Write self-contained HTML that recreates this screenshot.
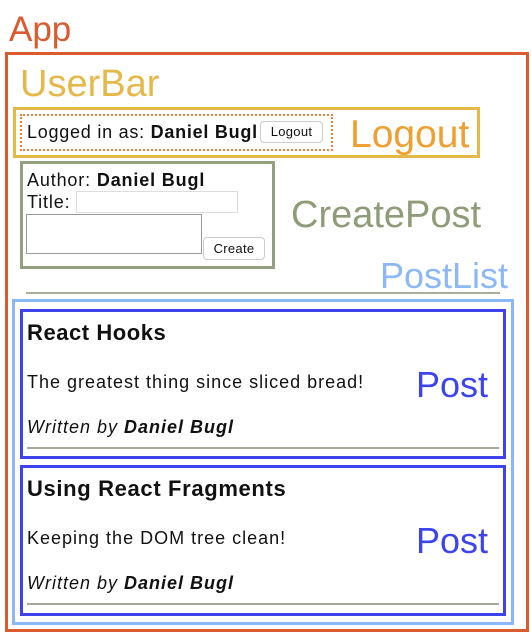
<!DOCTYPE html>
<html><head><meta charset="utf-8"><style>
body{margin:0;width:531px;height:636px;background:#fff;position:relative;overflow:hidden;font-family:"Liberation Sans",sans-serif;color:#111}
.a{position:absolute;line-height:1;white-space:nowrap}
.b{position:absolute;box-sizing:border-box}
.t{font-size:18px;letter-spacing:0.85px}
.btn{position:absolute;box-sizing:border-box;border:1px solid #ccc;border-radius:4px;background:#fff;font-size:13px;text-align:center;color:#111;letter-spacing:0.3px}
</style></head><body>
<div class="a" style="left:9px;top:12px;font-size:35px;color:#d95b2e">App</div>
<div class="b" style="left:5px;top:52px;width:524px;height:580px;border:3px solid #d95b2e"></div>

<div class="a" style="left:20px;top:65px;font-size:38px;color:#e5b84a">UserBar</div>
<div class="b" style="left:13px;top:107px;width:467px;height:51px;border:3px solid #e5b84a"></div>
<div class="b" style="left:20px;top:114px;width:313px;height:37px;border:2px dotted #e8843a"></div>
<div class="a t" style="left:27px;top:123px;letter-spacing:0.75px">Logged in as: <b>Daniel Bugl</b></div>
<div class="btn" style="left:260px;top:121px;width:63px;height:22px;line-height:20px">Logout</div>
<div class="a" style="left:350px;top:115px;font-size:39px;color:#f0a030">Logout</div>

<div class="b" style="left:20px;top:161px;width:255px;height:108px;border:3px solid #93a07e"></div>
<div class="a t" style="left:27px;top:171px">Author: <b>Daniel Bugl</b></div>
<div class="a t" style="left:27px;top:193px">Title:</div>
<div class="b" style="left:76px;top:191px;width:162px;height:22px;border:1px solid #ddd"></div>
<div class="b" style="left:26px;top:214px;width:176px;height:40px;border:1px solid #999"></div>
<div class="btn" style="left:203px;top:237px;width:62px;height:23px;line-height:21px">Create</div>
<div class="a" style="left:291px;top:196px;font-size:38px;color:#8f9c78">CreatePost</div>

<div class="a" style="left:380px;top:258px;font-size:36px;color:#8cb8f5">PostList</div>
<div class="b" style="left:26px;top:292px;width:474px;height:2px;background:#a8b097"></div>
<div class="b" style="left:12px;top:299px;width:502px;height:326px;border:3px solid #8cb8f5"></div>

<div class="b" style="left:20px;top:309px;width:486px;height:150px;border:3px solid #3d44ee"></div>
<div class="a" style="left:27px;top:322px;font-size:22px;font-weight:bold;letter-spacing:0.55px">React Hooks</div>
<div class="a t" style="left:27px;top:373px;letter-spacing:1px">The greatest thing since sliced bread!</div>
<div class="a t" style="left:27px;top:418px;font-style:italic;letter-spacing:1px">Written by <b>Daniel Bugl</b></div>
<div class="b" style="left:27px;top:447px;width:472px;height:2px;background:#a8a89a"></div>
<div class="a" style="left:416px;top:367px;font-size:36px;color:#3d44ee">Post</div>

<div class="b" style="left:20px;top:465px;width:486px;height:151px;border:3px solid #3d44ee"></div>
<div class="a" style="left:27px;top:478px;font-size:22px;font-weight:bold;letter-spacing:0.65px">Using React Fragments</div>
<div class="a t" style="left:27px;top:529px;letter-spacing:1px">Keeping the DOM tree clean!</div>
<div class="a t" style="left:27px;top:574px;font-style:italic;letter-spacing:1px">Written by <b>Daniel Bugl</b></div>
<div class="b" style="left:27px;top:603px;width:472px;height:2px;background:#a8a89a"></div>
<div class="a" style="left:416px;top:523px;font-size:36px;color:#3d44ee">Post</div>
</body></html>
